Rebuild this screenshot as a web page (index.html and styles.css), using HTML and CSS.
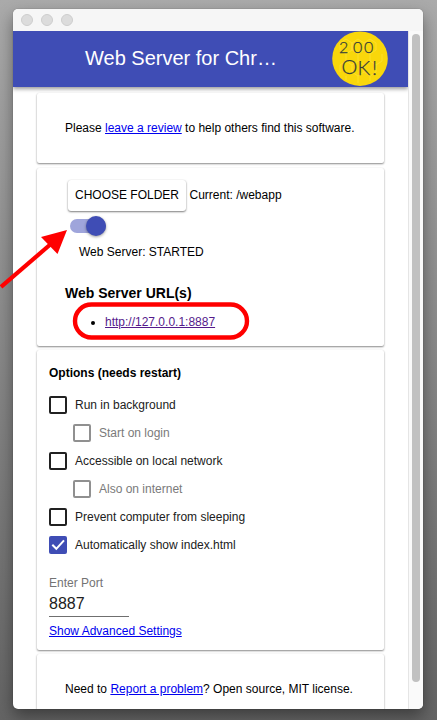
FILE: index.html
```html
<!DOCTYPE html>
<html lang="en">
<head>
<meta charset="utf-8">
<title>Web Server for Chrome</title>
<link rel="stylesheet" href="styles.css">
</head>
<body>
<main class="window">
  <div class="titlebar"><i></i><i></i><i></i></div>
  <div class="viewport">
    <div class="page">
      <header class="header">
        <h1>Web Server for Chr…</h1>
        <svg class="logo" width="56" height="56" viewBox="0 0 56 56">
          <ellipse cx="28" cy="27.700" rx="27.800" ry="27.200" fill="#f9d70b"/>
          <path d="M8 12l6-4 6 4v7l-6 4-6-4zM20 12l6-4 6 4v7l-6 4-6-4zM32 12l6-4 6 4v7l-6 4-6-4M14 23v7l6 4 6-4v-7M26 30l6 4 6-4v-7M38 30l6 4 6-4v-7M8 41v-7l6-4M20 34v7l6 4 6-4v-7M44 34v7l-6 4-6-4M14 45v4M26 45v7M38 45v5" fill="none" stroke="#ffe238" stroke-width=".7"/>
          <g class="scrawl">
            <text x="7 21 32" y="22 21.500 21.500" font-size="16">200</text>
            <text x="9.500 25.500 40" y="43 43.500 43.500" font-size="20">OK!</text>
          </g>
        </svg>
      </header>
      <section class="card review"><p>Please <a href="#">leave a review</a> to help others find this software.</p></section>
      <section class="card server">
        <div class="folder"><button>CHOOSE FOLDER</button><span class="current">Current: /webapp</span></div>
        <div class="switch"><b></b></div>
        <p class="status">Web Server: STARTED</p>
        <h2>Web Server URL(s)</h2>
        <ul><li><a class="visited" href="#">http://127.0.0.1:8887</a></li></ul>
      </section>
      <section class="card options">
        <h3>Options (needs restart)</h3>
        <div class="option"><i class="box"></i><span>Run in background</span></div>
        <div class="option sub"><i class="box"></i><span>Start on login</span></div>
        <div class="option"><i class="box"></i><span>Accessible on local network</span></div>
        <div class="option sub"><i class="box"></i><span>Also on internet</span></div>
        <div class="option"><i class="box"></i><span>Prevent computer from sleeping</span></div>
        <div class="option"><svg class="box checked" viewBox="0 0 18 18"><path d="M3.300 8.800l4 4 7.700-8.500" fill="none" stroke="#fff" stroke-width="2"/></svg><span>Automatically show index.html</span></div>
        <label class="label">Enter Port</label>
        <div class="port">8887</div>
        <a class="advanced" href="#">Show Advanced Settings</a>
      </section>
      <section class="card footer"><p>Need to <a href="#">Report a problem</a>? Open source, MIT license.</p></section>
    </div>
    <div class="scrollbar"><div class="thumb"></div></div>
  </div>
</main>
<svg class="annotations" width="437" height="720" viewBox="0 0 437 720">
  <path d="M1 287L52 243" stroke="#f00" stroke-width="4.2"/>
  <path d="M67 230L41 237L57.500 254Z" fill="#f00"/>
  <rect x="75" y="304.500" width="172" height="33" rx="16.500" fill="none" stroke="#f00" stroke-width="4.400"/>
</svg>
</body>
</html>
```
FILE: styles.css
```css
* { box-sizing: border-box; }
body {
  margin: 0; height: 720px; overflow: hidden; padding: 9px 14px 11px 13px;
  background: linear-gradient(#aaa, #646464);
  font: 12px/16px "Liberation Sans", sans-serif; color: #000;
}
h1, h2, h3, p, ul { margin: 0; padding: 0; white-space: nowrap; }
a { color: #00e; text-decoration: underline; }
.window {
  width: 410px; height: 700px; border-radius: 5px; overflow: hidden;
  background: #fff; box-shadow: 0 0 1px rgba(0,0,0,.5), 0 7px 16px rgba(0,0,0,.4);
}
.titlebar { height: 22px; background: #f6f6f6; display: flex; align-items: center; gap: 8px; padding: 0 8px; }
.titlebar i { width: 12px; height: 12px; border-radius: 50%; background: #dcdcdc; border: 1px solid #cdcdcd; }
.viewport { display: flex; height: 678px; }
.page { width: 395px; overflow: hidden; }
.header {
  height: 56px; background: #3f4db5; display: flex; align-items: center;
  padding-left: 72px; box-shadow: 0 2px 4px rgba(0,0,0,.4);
}
.header h1 { width: 247px; font-size: 20px; line-height: 24px; padding-bottom: 2px; font-weight: 400; color: #fff; }
.logo { display: block; flex: none; }
.scrawl { font-family: Lato, sans-serif; font-weight: 300; fill: #343c3a; stroke: #343c3a; stroke-width: .25; }
.card {
  width: 347px; margin-left: 24px; background: #fff; border-radius: 2px;
  box-shadow: 0 1px 2px rgba(0,0,0,.46), 0 0 1px rgba(0,0,0,.06);
}
.review { height: 70px; margin-top: 6px; padding: 27px 28px; }
.server { height: 178px; margin-top: 5px; padding: 12px 28px 0; }
.folder { display: flex; align-items: center; gap: 3.500px; padding-left: 3px; }
.current { padding-bottom: 2px; }
button {
  width: 118px; height: 31px; padding: 0 0 2px; border: 0; border-radius: 3px; background: #fff; color: #000;
  font: 12px/16px "Liberation Sans", sans-serif; box-shadow: 0 1px 2px rgba(0,0,0,.5), 0 0 1px rgba(0,0,0,.12);
}
.switch { width: 36px; height: 14px; margin: 8px 0 0 5px; border-radius: 7px; background: #9fa5db; display: flex; align-items: center; justify-content: flex-end; }
.switch b { flex: none; width: 20px; height: 20px; border-radius: 50%; background: #3f4db5; box-shadow: 0 1px 3px rgba(0,0,0,.4); }
.status { margin: 11px 0 0 14px; }
h2 { margin-top: 25px; font-size: 14px; line-height: 17px; }
ul { margin-top: 12px; padding-left: 40px; }
.visited { color: #551a8b; }
.options { height: 300px; margin-top: 4px; padding: 15px 12px 0; }
h3 { font-size: 12px; line-height: 16px; margin-bottom: 10px; }
.option { display: flex; align-items: center; gap: 8px; height: 28px; color: #212121; white-space: nowrap; }
.box { flex: none; width: 18px; height: 18px; border: 2px solid #212121; border-radius: 2px; }
.sub { padding-left: 24px; color: #7a7a7a; }
.sub .box { border-color: #909090; }
.checked { border: 0; background: #3f4db5; }
.label { display: block; margin-top: 16px; color: #737373; }
.port { width: 80px; height: 26px; border-bottom: 1px solid #6f6f6f; font-size: 16px; line-height: 25px; color: #212121; }
.advanced { display: block; width: max-content; margin-top: 6px; }
.footer { height: 70px; margin-top: 4px; padding: 27px 28px; }
.scrollbar { width: 15px; border-left: 1px solid #e5e5e5; background: #fafafa; padding: 3px 3px 0; }
.thumb { width: 8px; height: 648px; border-radius: 4px; background: #c1c1c1; }
.annotations { position: absolute; inset: 0; pointer-events: none; }
```
